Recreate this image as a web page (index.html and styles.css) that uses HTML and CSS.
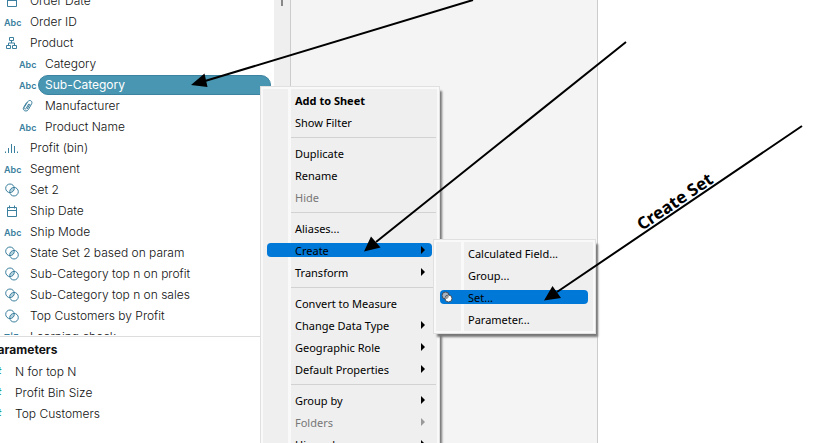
FILE: index.html
```
<!DOCTYPE html>
<html lang="en">
<head>
    <meta charset="UTF-8">
    <title>Create Set</title>
    <link rel="stylesheet" href="styles.css">
</head>
<body>
    <svg class="symbols" width="0" height="0">
        <symbol id="date" viewBox="0 0 14 14"><path d="M2.500 3.500h9v9h-9zM2.500 6.500h9M4.500 1.500v3M9.500 1.500v3"/></symbol>
        <symbol id="tree" viewBox="0 0 14 14"><path d="M4.500 1.500h4v3h-4zM1.500 9.500h4v3h-4zM7.500 9.500h4v3h-4zM6.500 4.500v2.500M3.500 9.500v-2.500h6v2.500"/></symbol>
        <symbol id="clip" viewBox="0 0 14 14"><path d="M8.800 4.800l-2.600 4.600c-.9 1.400-2.700.4-2-1l3.700-5.900c1.600-2.300 5-.4 3.800 2.200l-3.400 6c-1.700 2.700-6.200.9-4.700-2.200l3-5M10 5l-3 5.200"/></symbol>
        <symbol id="bin" viewBox="0 0 14 14"><path d="M.5 10.500v1.500M3.500 7v5M6.500 3v9M9.500 5v7M12.500 10.500v1.500"/></symbol>
        <symbol id="set" viewBox="0 0 14 14"><path class="overlap" d="M9 4.700a4 4 0 0 0-4 4.600a4 4 0 0 0 4-4.600z"/><circle cx="5" cy="5.300" r="4.300"/><circle cx="9" cy="8.700" r="4.300"/></symbol>
    </svg>
    <div class="app">
        <div class="data-pane">
            <ul class="fields">
                <li><svg class="icon"><use href="#date"/></svg>Order Date</li>
                <li><b class="icon">Abc</b>Order ID</li>
                <li><svg class="icon"><use href="#tree"/></svg>Product</li>
                <li class="child"><b class="icon">Abc</b>Category</li>
                <li class="child selected"><b class="icon">Abc</b><span>Sub-Category</span></li>
                <li class="child"><svg class="icon"><use href="#clip"/></svg>Manufacturer</li>
                <li class="child"><b class="icon">Abc</b>Product Name</li>
                <li><svg class="icon"><use href="#bin"/></svg>Profit (bin)</li>
                <li><b class="icon">Abc</b>Segment</li>
                <li><svg class="icon"><use href="#set"/></svg>Set 2</li>
                <li><svg class="icon"><use href="#date"/></svg>Ship Date</li>
                <li><b class="icon">Abc</b>Ship Mode</li>
                <li><svg class="icon"><use href="#set"/></svg>State Set 2 based on param</li>
                <li><svg class="icon"><use href="#set"/></svg>Sub-Category top n on profit</li>
                <li><svg class="icon"><use href="#set"/></svg>Sub-Category top n on sales</li>
                <li><svg class="icon"><use href="#set"/></svg>Top Customers by Profit</li>
                <li><b class="icon">T|F</b>Learning check</li>
            </ul>
            <div class="params">
                <h2>Parameters</h2>
                <ul>
                    <li><b>#</b>N for top N</li>
                    <li><b>#</b>Profit Bin Size</li>
                    <li><b>#</b>Top Customers</li>
                </ul>
            </div>
            <div class="scrollbar"><i></i></div>
        </div>
        <div class="shelf"></div>
        <div class="sheet"></div>
    </div>

    <ul class="menu context">
        <li><button class="default">Add to Sheet</button></li>
        <li><button>Show Filter</button></li>
        <li class="sep"></li>
        <li><button>Duplicate</button></li>
        <li><button>Rename</button></li>
        <li><button disabled>Hide</button></li>
        <li class="sep"></li>
        <li><button>Aliases...</button></li>
        <li><button class="sub active">Create</button></li>
        <li><button class="sub">Transform</button></li>
        <li class="sep"></li>
        <li><button>Convert to Measure</button></li>
        <li><button class="sub">Change Data Type</button></li>
        <li><button class="sub">Geographic Role</button></li>
        <li><button class="sub">Default Properties</button></li>
        <li class="sep"></li>
        <li><button class="sub">Group by</button></li>
        <li><button class="sub" disabled>Folders</button></li>
        <li><button class="sub">Hierarchy</button></li>
    </ul>
    <ul class="menu create">
        <li><button>Calculated Field...</button></li>
        <li><button>Group...</button></li>
        <li><button class="active"><svg class="set-icon" viewBox="0 0 12 12"><circle cx="4.500" cy="4.500" r="3.500" fill="#a9b4c2"/><circle cx="7.500" cy="7.500" r="3.500" fill="#fff"/><path d="M8 4.500a3.500 3.500 0 0 0-4 3.500a3.500 3.500 0 0 0 4-3.500z" fill="#999" stroke="none"/></svg>Set...</button></li>
        <li><button>Parameter...</button></li>
    </ul>

    <svg class="arrows" width="839" height="443">
        <path class="line" d="M473 0L205 81M626 42L376 242M802 126L557 292"/>
        <path d="M191 85l13.500-11.500 3 13.500zM364 251.500l7-15 9.500 11zM544 300.500l8.500-14.500 8.500 12z"/>
        <text transform="translate(642 231) rotate(-34)">Create Set</text>
    </svg>
</body>
</html>
```

FILE: styles.css
```
html,body{height: 100%;margin: 0;overflow: hidden;}
body{position: relative;background-color: #fff;font-family: Inter,"Liberation Sans",sans-serif;font-size: 12px;font-weight: 300;color: #111;}
ul,li,h2{list-style: none;margin: 0;padding: 0;}
.symbols{position: absolute;}

.app{display: flex;height: 100%;}
.data-pane{display: grid;grid-template-columns: 1fr 16px;grid-template-rows: 1fr 107px;flex: 0 0 290px;height: 100%;overflow: hidden;}
.shelf{flex: 0 0 306px;background-color: #f4f4f4;border: solid #ccc;border-width: 0 1px;}
.sheet{flex: 1;}
.scrollbar{grid-column: 2;grid-row: 1 / 3;background-color: #efefef;}
.scrollbar i{display: block;width: 2px;height: 6px;margin: 0 auto;background-color: #888;}

.fields{margin: -10px 0 1px;min-height: 0;overflow: hidden;white-space: nowrap;}
.fields li{display: flex;align-items: center;height: 21px;padding-left: 4px;}
.fields .child{padding-left: 19px;}
.icon{flex: none;width: 16px;height: 14px;margin-right: 10px;fill: none;stroke: #3b7f9e;line-height: 16px;}
svg.icon{width: 14px;margin: 0 11px 0 1px;}
.overlap{fill: #b4d0dc;stroke: none;}
b.icon{font-size: 9px;font-weight: 600;color: #3b7f9e;}
.selected .icon{margin-right: 3px;}
.selected span{flex: 1;box-sizing: border-box;height: 20px;margin-right: 3px;padding-left: 6px;font-weight: 400;line-height: 18px;color: #fff;background-color: #4996b2;border: 1px solid #3b83a0;border-radius: 10px;}

.params{grid-column: 1;border-top: 1px solid #ddd;overflow: hidden;white-space: nowrap;}
.params h2{margin-left: -10px;padding-top: 2px;font-size: 12px;line-height: 22px;color: #111;}
.params li{display: flex;align-items: center;height: 21px;margin-left: -6px;}
.params b{width: 21px;color: #2b9c80;}

.menu{position: absolute;box-sizing: border-box;background: linear-gradient(#f9f9f9,#f9f9f9) 27px 0 / 3px 100% no-repeat #efefef;border: 1px solid #e0e0e0;outline: 2px solid #f9f9f9;outline-offset: -3px;box-shadow: 3px 4px 2px -1px #777;font-family: "Noto Sans","Open Sans",sans-serif;font-size: 11px;font-weight: 400;}
.menu button{display: flex;align-items: center;position: relative;box-sizing: border-box;width: 100%;height: 14px;margin: 4px 0;padding: 0 0 0 28px;border: 0;border-radius: 4px;background: none;font: inherit;color: #000;white-space: nowrap;}
.menu li{height: 22px;display: flex;padding: 0 7px 0 6px;}
.menu .sep{height: 1px;margin: 4px 3px 4px 30px;padding: 0;background-color: #d2d2d2;}
.menu .default{font-weight: bold;}
.menu .active{background-color: #0078d7;}
.menu button:disabled{color: #777;}
.sub:after{content: "";margin: 0 7px 0 auto;border: solid transparent;border-width: 4px 0 4px 4px;border-left-color: #000;}
.sub:disabled:after{border-left-color: #999;}
.context{left: 260px;top: 86px;width: 180px;padding-top: 2px;}
.create{left: 433px;top: 239px;width: 163px;padding: 2px 0 3px;}
.set-icon{position: absolute;left: 1px;top: 1px;width: 12px;height: 12px;stroke: #444c58;stroke-width: 1;}

/* callouts over the menus */
.arrows{position: absolute;left: 0;top: 0;}
.arrows .line{stroke: #000;stroke-width: 2;fill: none;}
.arrows text{font: bold 17px "Noto Sans","Open Sans",sans-serif;}
```
